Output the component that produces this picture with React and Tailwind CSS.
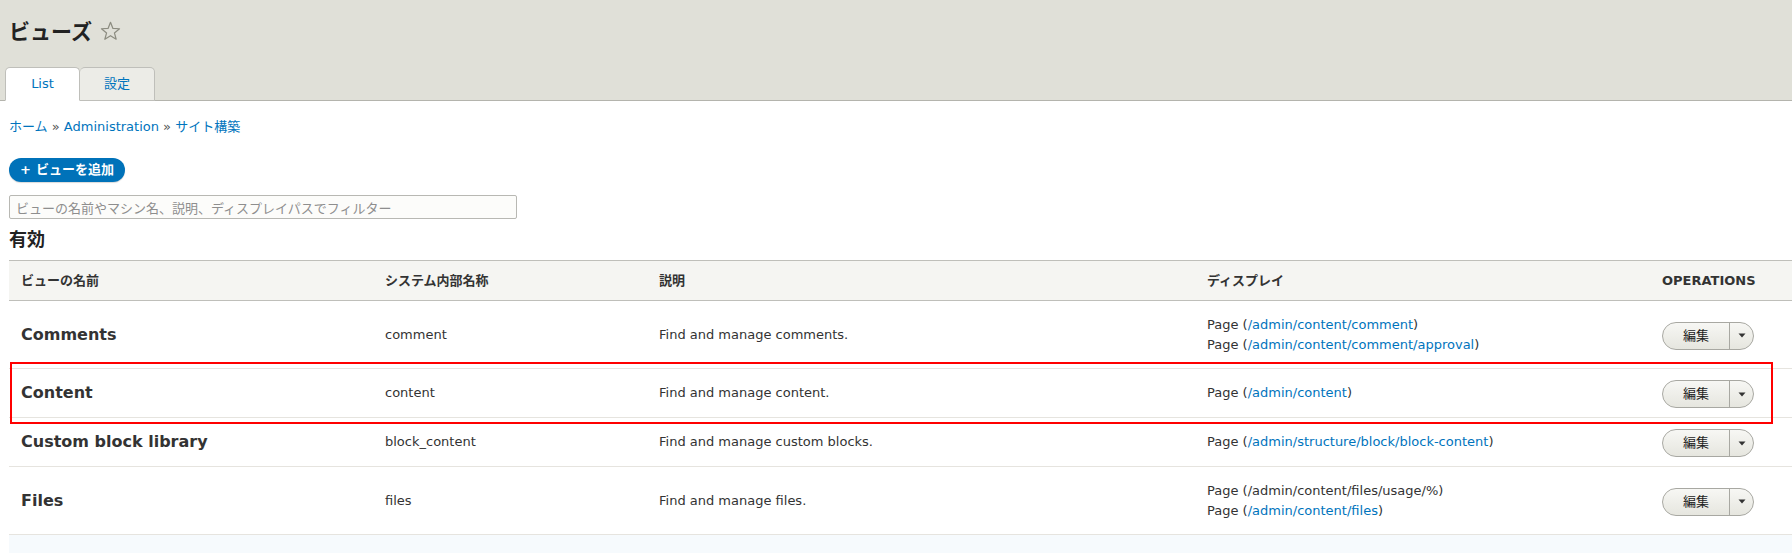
import React from 'react';

const views = [
  {
    name: 'Comments',
    machine: 'comment',
    desc: 'Find and manage comments.',
    displays: [
      { path: '/admin/content/comment', link: true },
      { path: '/admin/content/comment/approval', link: true },
    ],
    height: 'h-[68px]',
  },
  {
    name: 'Content',
    machine: 'content',
    desc: 'Find and manage content.',
    displays: [{ path: '/admin/content', link: true }],
    height: 'h-[49px]',
  },
  {
    name: 'Custom block library',
    machine: 'block_content',
    desc: 'Find and manage custom blocks.',
    displays: [{ path: '/admin/structure/block/block-content', link: true }],
    height: 'h-[49px]',
  },
  {
    name: 'Files',
    machine: 'files',
    desc: 'Find and manage files.',
    displays: [
      { path: '/admin/content/files/usage/%', link: false },
      { path: '/admin/content/files', link: true },
    ],
    height: 'h-[68px]',
  },
];

const cols = 'grid grid-cols-[364px_274px_548px_455px_1fr]';

function EditButton() {
  return (
    <div className="inline-flex h-[28px] w-[92px] rounded-full border border-[#a8a8a2] bg-gradient-to-b from-[#f7f7f4] to-[#e6e6df] overflow-hidden">
      <span className="w-[66px] flex items-center justify-center text-[13px] text-[#222]">編集</span>
      <span className="flex-1 border-l border-[#a8a8a2] flex items-center justify-center">
        <svg width="8" height="5" viewBox="0 0 8 5">
          <path d="M0.5 0.5 L7.5 0.5 L4 4.5 Z" fill="#333" />
        </svg>
      </span>
    </div>
  );
}

export default function App() {
  return (
    <div className="min-h-[553px] bg-white text-[#333] font-['DejaVu_Sans','Noto_Sans_CJK_JP',sans-serif]">
      <div className="bg-[#e0e0d8] border-b border-[#b4b4ad] h-[101px] flex flex-col justify-between">
        <h1 className="pl-[9px] pt-[17px] flex items-center gap-[8px] text-[21px] leading-[26px] font-bold text-[#222] font-['Noto_Sans_CJK_JP',sans-serif]">
          ビューズ
          <svg width="21" height="20" viewBox="0 0 24 23" className="mt-[1px]">
            <path
              d="M12 1.5 L14.8 8.6 L22.4 8.9 L16.5 13.7 L18.5 21 L12 16.9 L5.5 21 L7.5 13.7 L1.6 8.9 L9.2 8.6 Z"
              fill="none"
              stroke="#8c8c80"
              strokeWidth="1.4"
              strokeLinejoin="round"
            />
          </svg>
        </h1>
        <div className="flex pl-[5px] -mb-px">
          <div className="w-[75px] h-[34px] bg-white border border-[#bfbfba] border-b-white rounded-t-[5px] flex items-center justify-center text-[13px] text-[#0074bd]">
            List
          </div>
          <div className="w-[75px] h-[34px] bg-[#ecece7] border border-l-0 border-[#bfbfba] rounded-t-[5px] flex items-center justify-center text-[13px] text-[#0074bd]">
            設定
          </div>
        </div>
      </div>

      <div className="pl-[9px]">
        <div className="mt-[16px] h-[20px] leading-[20px] text-[13px] text-[#0074bd]">
          ホーム <span className="text-[#555]">»</span> Administration <span className="text-[#555]">»</span> サイト構築
        </div>

        <button className="mt-[21px] h-[24px] px-[11px] rounded-full bg-[#0072b9] text-white text-[13px] font-bold flex items-center gap-[5px] shadow-[0_1px_1px_rgba(0,0,0,0.15)]">
          <span>+</span>
          <span>ビューを追加</span>
        </button>

        <input
          className="block mt-[13px] h-[24px] w-[508px] border border-[#b8b8b3] rounded-[2px] bg-[#fcfcfa] px-[6px] text-[13px] placeholder:text-[#8e8e8e] font-['Noto_Sans_CJK_JP',sans-serif]"
          placeholder="ビューの名前やマシン名、説明、ディスプレイパスでフィルター"
        />

        <h2 className="mt-[8px] text-[18px] leading-[26px] font-bold text-[#222]">有効</h2>

        <div className="relative mt-[7px]">
          <div className={`${cols} h-[41px] bg-[#f5f5f2] border-y border-[#bfbfba] items-center text-[13px] font-bold text-[#333]`}>
            <div className="pl-[12px]">ビューの名前</div>
            <div className="pl-[12px]">システム内部名称</div>
            <div className="pl-[12px]">説明</div>
            <div className="pl-[12px]">ディスプレイ</div>
            <div className="pl-[12px] uppercase">Operations</div>
          </div>

          {views.map((v) => (
            <div key={v.name} className={`${cols} ${v.height} border-b border-[#e6e4df] items-center text-[13px]`}>
              <div className="pl-[12px] text-[16px] font-bold text-[#333]">{v.name}</div>
              <div className="pl-[12px]">{v.machine}</div>
              <div className="pl-[12px]">{v.desc}</div>
              <div className="pl-[12px] leading-[20px]">
                {v.displays.map((d) => (
                  <div key={d.path}>
                    Page (
                    {d.link ? <span className="text-[#0074bd]">{d.path}</span> : d.path}
                    )
                  </div>
                ))}
              </div>
              <div className="pl-[12px] pt-[2px]">
                <EditButton />
              </div>
            </div>
          ))}

          <div className="h-[18px] bg-[#f6fafd]" />

          <div className="absolute left-[1px] top-[102px] w-[1763px] h-[62px] border-2 border-[#ff0000] pointer-events-none" />
        </div>
      </div>
    </div>
  );
}
